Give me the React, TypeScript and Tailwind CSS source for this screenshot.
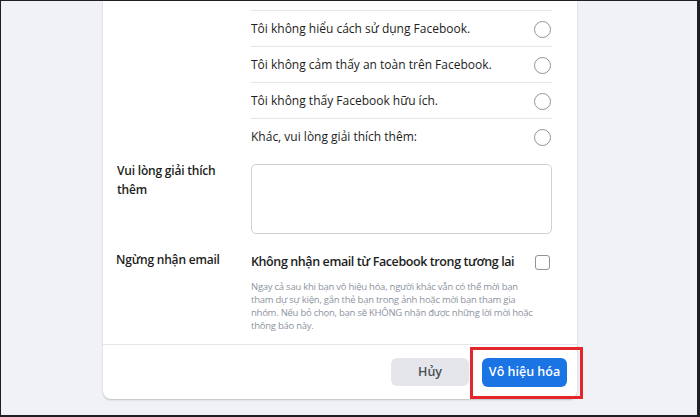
const reasons = [
  "Tôi không hiểu cách sử dụng Facebook.",
  "Tôi không cảm thấy an toàn trên Facebook.",
  "Tôi không thấy Facebook hữu ích.",
  "Khác, vui lòng giải thích thêm:",
];

const noteLines = [
  "Ngay cả sau khi bạn vô hiệu hóa, người khác vẫn có thể mời bạn",
  "tham dự sự kiện, gắn thẻ bạn trong ảnh hoặc mời bạn tham gia",
  "nhóm. Nếu bỏ chọn, bạn sẽ KHÔNG nhận được những lời mời hoặc",
  "thông báo này.",
];

const App = () => {
  return (
    <div
      className="relative w-[700px] h-[417px] overflow-hidden bg-[#f0f2f5] border-t border-l border-r-[3px] border-b-2 border-[#1e1f22]"
      style={{ fontFamily: '"Open Sans", "Noto Sans", sans-serif' }}
    >
      <div className="ml-[102px] w-[474px] h-[398px] bg-white rounded-b-lg shadow-[0_1px_2px_rgba(0,0,0,0.22)] flex flex-col">
        {/* reasons */}
        <div className="pl-[148px] pt-[9px]">
          <div className="w-[301px]">
            {reasons.map((r) => (
              <div
                key={r}
                className="h-[36px] border-t border-[#e4e6eb] flex items-center justify-between text-[12px] text-[#1c1e21]"
              >
                <span className="pt-[1px]">{r}</span>
                <span className="w-[17px] h-[17px] rounded-full border-[1.5px] border-[#8d949e] mr-[1px] mt-[2px]" />
              </div>
            ))}
          </div>
        </div>

        {/* explain */}
        <div className="flex mt-[10px]">
          <div className="w-[148px] pl-[14px] pr-3 -mt-[3px] text-[12px] tracking-[-0.2px] leading-[19px] font-semibold text-[#1c1e21]">
            Vui lòng giải thích thêm
          </div>
          <div className="w-[301px] h-[70px] rounded-[5px] border border-[#ccd0d5]" />
        </div>

        {/* email */}
        <div className="flex mt-[15px]">
          <div className="w-[148px] pl-[13px] pt-[1px] text-[12px] tracking-[-0.2px] leading-[19px] font-semibold text-[#1c1e21]">
            Ngừng nhận email
          </div>
          <div className="w-[301px]">
            <div className="flex items-center justify-between pt-[4px]">
              <span className="whitespace-nowrap text-[12.5px] tracking-[-0.4px] font-semibold text-[#1c1e21]">
                Không nhận email từ Facebook trong tương lai
              </span>
              <span className="w-[15px] h-[15px] rounded-[3px] border-[1.5px] border-[#8d949e] mr-[2px]" />
            </div>
            <div className="mt-[8px] text-[9.5px] tracking-[-0.25px] leading-[13px] text-[#8d949e]">
              {noteLines.map((l) => (
                <div key={l} className="whitespace-nowrap">
                  {l}
                </div>
              ))}
            </div>
          </div>
        </div>

        {/* footer */}
        <div className="mt-auto h-[55px] border-t border-[#e4e6eb] flex items-center justify-end gap-[13px] pr-[10px]">
          <button className="w-[78px] h-[28px] rounded-md bg-[#e4e6eb] text-[12.5px] font-semibold text-[#4b4f56]">
            Hủy
          </button>
          <button className="w-[85px] h-[29px] rounded-md bg-[#1b74e4] text-[12.5px] font-semibold text-white">
            Vô hiệu hóa
          </button>
        </div>
      </div>

      {/* annotation */}
      <div className="absolute left-[469px] top-[346px] w-[113px] h-[52px] border-[3px] border-[#e3262b]" />
    </div>
  );
};

export default App;
